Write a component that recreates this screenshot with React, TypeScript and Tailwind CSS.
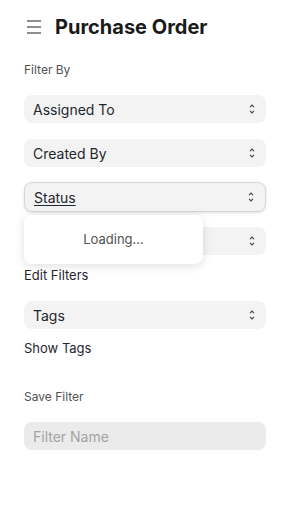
import React from "react";

const Chevrons = () => (
  <svg width="8" height="12" viewBox="0 0 8 12" fill="none" stroke="#4a4a4a" strokeWidth="1.1" strokeLinecap="round" strokeLinejoin="round">
    <path d="M2.3 3.8 L4 2 L5.7 3.8" />
    <path d="M2.3 8.2 L4 10 L5.7 8.2" />
  </svg>
);

const Select = ({ label, focused = false, className = "" }: { label: string; focused?: boolean; className?: string }) => (
  <div
    className={
      "flex h-[28px] items-center justify-between rounded-lg bg-[#f3f3f3] pl-[9px] pr-[10px] text-[14px] text-[#1f272e] " +
      (focused ? "border border-[#d6d6d6] shadow-[0_1px_3px_rgba(0,0,0,0.12)] h-[30px] -mt-px -mb-px pl-[8px] " : "") +
      className
    }
  >
    <span className={focused ? "underline underline-offset-2" : ""}>{label}</span>
    <Chevrons />
  </div>
);

export default function App() {
  return (
    <div className="relative h-[520px] w-[303px] bg-white pl-[24px] pr-[37px]" style={{ fontFamily: "Inter, 'Noto Sans', sans-serif" }}>
      <div className="flex h-[54px] items-center">
        <svg width="14" height="14" viewBox="0 0 14 14" className="ml-[3px]" stroke="#6b6b6b" strokeWidth="1.3">
          <path d="M0 1 H14 M0 7 H14 M0 13 H14" />
        </svg>
        <h1 className="ml-[14px] text-[20px] font-bold leading-[28px] text-[#1a1a1a]">Purchase Order</h1>
      </div>
      <div className="mt-[8px] text-[12px] leading-[16px] text-[#525252]">Filter By</div>
      <div className="mt-[17px] flex flex-col gap-[16px]">
        <Select label="Assigned To" />
        <Select label="Created By" />
        <Select label="Status" focused />
        <Select label="" />
      </div>
      <div className="mt-[11px] text-[13px] leading-[18px] text-[#1f272e]">Edit Filters</div>
      <div className="mt-[17px]">
        <Select label="Tags" />
      </div>
      <div className="mt-[10px] text-[13px] leading-[18px] text-[#1f272e]">Show Tags</div>
      <div className="mt-[32px] text-[12px] leading-[16px] text-[#525252]">Save Filter</div>
      <input
        placeholder="Filter Name"
        className="mt-[17px] h-[28px] w-full rounded-lg bg-[#ebebeb] px-[9px] text-[14px] text-[#1f272e] outline-none placeholder:text-[#a3a3a3]"
      />
      <div className="absolute left-[24px] top-[215px] flex h-[49px] w-[179px] items-center justify-center rounded-lg bg-white text-[13px] text-[#525252] shadow-[0_2px_10px_rgba(0,0,0,0.13)]">
        Loading...
      </div>
    </div>
  );
}
